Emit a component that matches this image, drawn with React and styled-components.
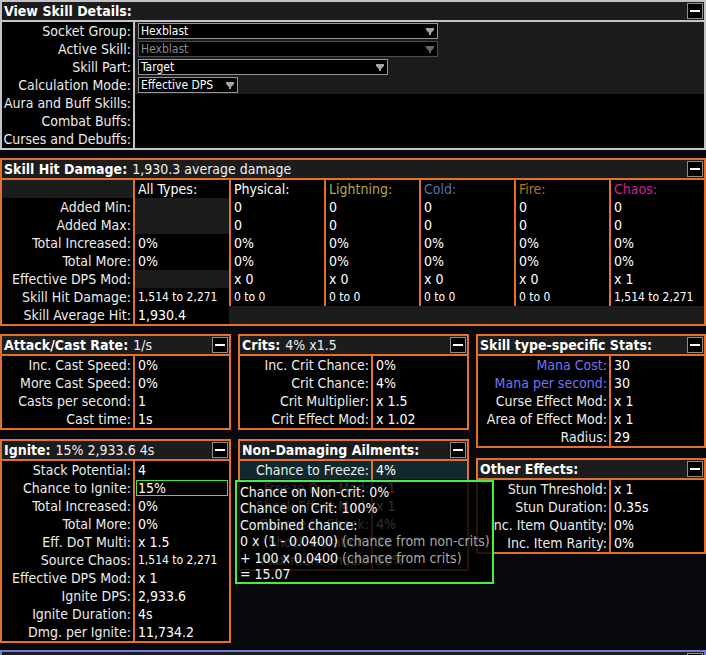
import React from "react";
import styled, { createGlobalStyle } from "styled-components";

const ORANGE = "#e4702c";
const SILVER = "#c4c4c4";
const PURPLE = "#7676dc";
const SHADE = "#1c1c1c";

const dmgColors = {
  Lightning: "#adaa47",
  Cold: "#4a73b8",
  Fire: "#b97123",
  Chaos: "#d02090",
};

const GlobalStyle = createGlobalStyle`
  *, *::before, *::after { box-sizing: border-box; }
  html, body {
    margin: 0;
    padding: 0;
    background: #08090d;
    overflow: hidden;
  }
  body {
    font-family: "DejaVu Sans Condensed", "DejaVu Sans", sans-serif;
    font-size: 14px;
    color: #f2f2f2;
  }
`;

const Page = styled.div`
  width: 706px;
  height: 655px;
  overflow: hidden;
`;

const Section = styled.section`
  position: relative;
  border: 2px solid ${(p) => p.$border};
  background: #000;
  margin-top: ${(p) => p.$mt || 0}px;
`;

const Head = styled.header`
  display: flex;
  align-items: center;
  height: 20px;
  padding: 0 1px 0 2px;
  background: ${SHADE};
  border-bottom: 2px solid ${(p) => p.$border};
  white-space: nowrap;
`;

const Title = styled.span`
  font-weight: bold;
  color: #fff;
`;

const Sub = styled.span`
  margin-left: 5px;
  color: #f0f0f0;
`;

const Minus = styled.span`
  margin-left: auto;
  width: 16px;
  height: 16px;
  border: 1px solid #8c8c8c;
  background: #000;
  display: flex;
  align-items: center;
  justify-content: center;

  &::after {
    content: "";
    width: 10px;
    height: 2px;
    background: #fff;
  }
`;

const Grid = styled.div`
  display: grid;
  grid-template-columns: ${(p) => p.$cols};
  grid-auto-rows: 18px;
`;

const Label = styled.div`
  text-align: right;
  padding-right: 2px;
  line-height: 18px;
  white-space: nowrap;
  overflow: hidden;
  color: ${(p) => p.$color || "#ececec"};
  background: ${(p) => p.$bg || "#000"};
  border-right: 2px solid ${(p) => p.$line};
`;

const Cell = styled.div`
  padding-left: 3px;
  line-height: 18px;
  white-space: nowrap;
  overflow: hidden;
  font-size: ${(p) => (p.$small ? "12px" : "14px")};
  color: ${(p) => p.$color || "#fff"};
  background: ${(p) => p.$bg || "#000"};
  border-right: ${(p) => (p.$line ? `2px solid ${p.$line}` : "none")};
  grid-column: ${(p) => p.$span || "auto"};
  box-shadow: ${(p) => (p.$focus ? "inset 0 0 0 1px #000, inset 0 0 0 2px #44e644" : "none")};
`;

const Select = styled.div`
  display: flex;
  align-items: center;
  justify-content: space-between;
  width: ${(p) => p.$w}px;
  height: 16px;
  margin-top: 1px;
  padding: 0 3px 0 2px;
  background: #000;
  border: 1px solid ${(p) => (p.$disabled ? "#4c4c4c" : "#959595")};
  color: ${(p) => (p.$disabled ? "#8a8a8a" : "#fff")};
  font-size: 12px;
  line-height: 14px;
`;

const Columns = styled.div`
  display: flex;
  gap: 7px;
  margin-top: 8px;
  align-items: flex-start;
`;

const Column = styled.div`
  display: flex;
  flex-direction: column;
  width: ${(p) => p.$w}px;
`;

const Tooltip = styled.div`
  position: absolute;
  left: -5px;
  top: 39px;
  width: 259px;
  height: 104px;
  padding: 2px 0 0 3px;
  border: 2px solid #44ee44;
  background: rgba(0, 0, 0, 0.82);
  z-index: 2;
  font-size: 14px;
  line-height: 16.4px;
  color: #f4f4f4;
  white-space: nowrap;
`;

const Dim = styled.span`
  color: #a8a8a8;
`;

const ArrowIcon = ({ color }) => (
  <svg width="8" height="7" viewBox="0 0 8 7">
    <path d="M0 0H8V2L5 5V7H3V5L0 2Z" fill={color} />
  </svg>
);

const Dropdown = ({ width, text, disabled }) => (
  <Select $w={width} $disabled={disabled}>
    <span>{text}</span>
    <ArrowIcon color={disabled ? "#666" : "#a4a4a4"} />
  </Select>
);

const Panel = ({ border, title, sub, mt, children }) => (
  <Section $border={border} $mt={mt}>
    <Head $border={border}>
      <Title>{title}</Title>
      {sub && <Sub>{sub}</Sub>}
      <Minus />
    </Head>
    {children}
  </Section>
);

const StatPanel = ({ title, sub, mt, rows, children }) => (
  <Panel border={ORANGE} title={title} sub={sub} mt={mt}>
    <Grid $cols="133px 1fr">
      {rows.map(([label, value, opts = {}]) => (
        <React.Fragment key={label}>
          <Label $line={ORANGE} $color={opts.color} $bg={opts.bg}>
            {label}:
          </Label>
          <Cell $small={opts.small} $bg={opts.bg} $focus={opts.focus} $color={opts.valColor}>
            {value}
          </Cell>
        </React.Fragment>
      ))}
    </Grid>
    {children}
  </Panel>
);

const skillRows = [
  ["Socket Group", <Dropdown width={300} text="Hexblast" />],
  ["Active Skill", <Dropdown width={300} text="Hexblast" disabled />],
  ["Skill Part", <Dropdown width={250} text="Target" />],
  ["Calculation Mode", <Dropdown width={100} text="Effective DPS" />],
  ["Aura and Buff Skills", null],
  ["Combat Buffs", null],
  ["Curses and Debuffs", null],
];

const types = ["Physical", "Lightning", "Cold", "Fire", "Chaos"];
const BLANK = "blank";

const hitRows = [
  ["Added Min", BLANK, ["0", "0", "0", "0", "0"]],
  ["Added Max", BLANK, ["0", "0", "0", "0", "0"]],
  ["Total Increased", "0%", ["0%", "0%", "0%", "0%", "0%"]],
  ["Total More", "0%", ["0%", "0%", "0%", "0%", "0%"]],
  ["Effective DPS Mod", BLANK, ["x 0", "x 0", "x 0", "x 0", "x 1"]],
  ["Skill Hit Damage", "1,514 to 2,271", ["0 to 0", "0 to 0", "0 to 0", "0 to 0", "1,514 to 2,271"], true],
];

const castRows = [
  ["Inc. Cast Speed", "0%"],
  ["More Cast Speed", "0%"],
  ["Casts per second", "1"],
  ["Cast time", "1s"],
];

const critRows = [
  ["Inc. Crit Chance", "0%"],
  ["Crit Chance", "4%"],
  ["Crit Multiplier", "x 1.5"],
  ["Crit Effect Mod", "x 1.02"],
];

const typeRows = [
  ["Mana Cost", "30", { color: "#7272f4" }],
  ["Mana per second", "30", { color: "#7272f4" }],
  ["Curse Effect Mod", "x 1"],
  ["Area of Effect Mod", "x 1"],
  ["Radius", "29"],
];

const igniteRows = [
  ["Stack Potential", "4"],
  ["Chance to Ignite", "15%", { focus: true }],
  ["Total Increased", "0%"],
  ["Total More", "0%"],
  ["Eff. DoT Multi", "x 1.5"],
  ["Source Chaos", "1,514 to 2,271", { small: true }],
  ["Effective DPS Mod", "x 1"],
  ["Ignite DPS", "2,933.6"],
  ["Ignite Duration", "4s"],
  ["Dmg. per Ignite", "11,734.2"],
];

const ailmentRows = [
  ["Chance to Freeze", "4%", { bg: "#10292d" }],
  ["Freeze Dur. Mod", "x 1"],
  ["Shock Effect Mod", "x 1"],
  ["Chance to Shock", "4%"],
  ["Shock Duration", "2s"],
  ["Maximum Shock", "50%"],
];

const otherRows = [
  ["Stun Threshold", "x 1"],
  ["Stun Duration", "0.35s"],
  ["Inc. Item Quantity", "0%"],
  ["Inc. Item Rarity", "0%"],
];

export default function App() {
  return (
    <Page>
      <GlobalStyle />

      <Panel border={SILVER} title="View Skill Details:">
        <Grid $cols="133px 1fr">
          {skillRows.map(([label, control], i) => (
            <React.Fragment key={label}>
              <Label $line={SILVER}>{label}:</Label>
              <Cell $bg={i < 4 ? SHADE : "#000"}>{control}</Cell>
            </React.Fragment>
          ))}
        </Grid>
      </Panel>

      <Panel border={ORANGE} title="Skill Hit Damage:" sub="1,930.3 average damage" mt={8}>
        <Grid $cols="133px 96px 95px 95px 95px 95px 93px">
          <Label $line={ORANGE} $bg={SHADE} />
          <Cell $line={ORANGE}>All Types:</Cell>
          {types.map((t, i) => (
            <Cell key={t} $line={i < 4 ? ORANGE : null} $color={dmgColors[t]}>
              {t}:
            </Cell>
          ))}
          {hitRows.map(([label, all, vals, small]) => (
            <React.Fragment key={label}>
              <Label $line={ORANGE}>{label}:</Label>
              <Cell $line={ORANGE} $bg={all === BLANK ? SHADE : "#000"} $small={small}>
                {all === BLANK ? "" : all}
              </Cell>
              {vals.map((v, i) => (
                <Cell key={i} $line={i < 4 ? ORANGE : null} $small={small}>
                  {v}
                </Cell>
              ))}
            </React.Fragment>
          ))}
          <Label $line={ORANGE}>Skill Average Hit:</Label>
          <Cell $line={SHADE}>1,930.4</Cell>
          <Cell $bg={SHADE} $span="3 / 8" />
        </Grid>
      </Panel>

      <Columns>
        <Column $w={231}>
          <StatPanel title="Attack/Cast Rate:" sub="1/s" rows={castRows} />
          <StatPanel title="Ignite:" sub="15% 2,933.6 4s" rows={igniteRows} mt={9} />
        </Column>
        <Column $w={231}>
          <StatPanel title="Crits:" sub="4% x1.5" rows={critRows} />
          <StatPanel title="Non-Damaging Ailments:" rows={ailmentRows} mt={9}>
            <Tooltip>
              <div>Chance on Non-crit: 0%</div>
              <div>Chance on Crit: 100%</div>
              <div>Combined chance:</div>
              <div>
                0 x (1 - 0.0400) <Dim>(chance from non-crits)</Dim>
              </div>
              <div>
                + 100 x 0.0400 <Dim>(chance from crits)</Dim>
              </div>
              <div>= 15.07</div>
            </Tooltip>
          </StatPanel>
        </Column>
        <Column $w={230}>
          <StatPanel title="Skill type-specific Stats:" rows={typeRows} />
          <StatPanel title="Other Effects:" rows={otherRows} mt={10} />
        </Column>
      </Columns>

      <Panel border={PURPLE} title="" mt={7} />
    </Page>
  );
}
